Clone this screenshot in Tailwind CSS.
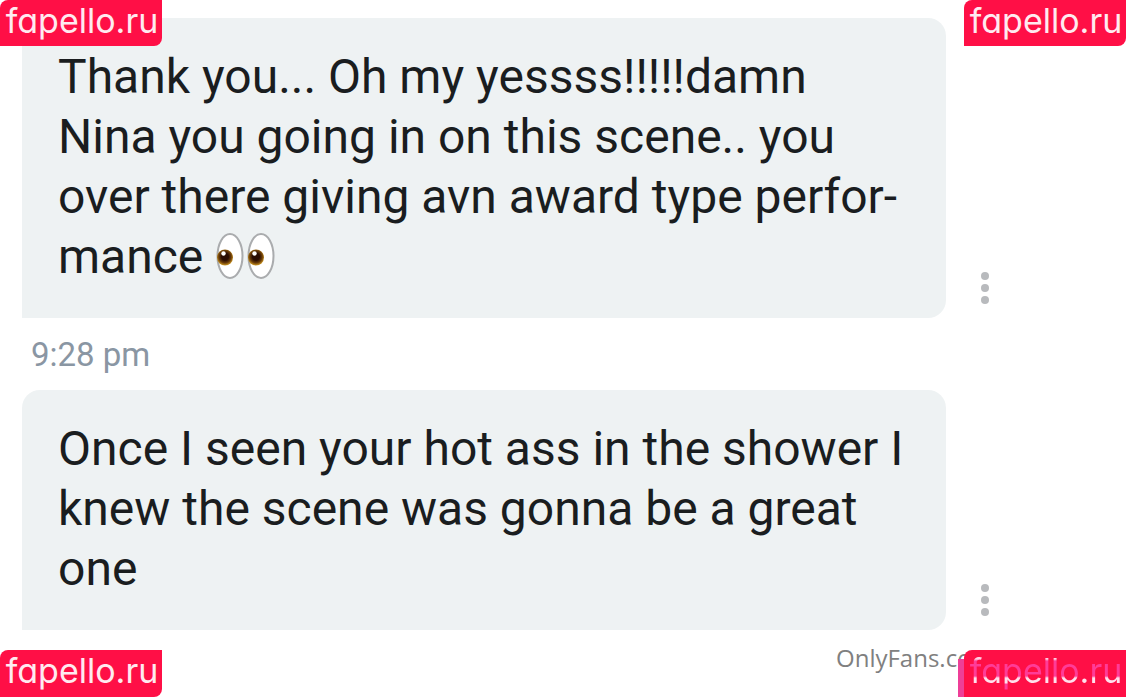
<!DOCTYPE html>
<html lang="en">
<head>
    <meta charset="UTF-8">
    <meta name="viewport" content="width=device-width, initial-scale=1.0">
    <title>Messages</title>
    <script src="https://cdn.jsdelivr.net/npm/@tailwindcss/browser@4"></script>
</head>
<body class="relative min-h-screen overflow-hidden bg-white font-['Roboto',sans-serif]">
    <main class="pt-[18px] pr-[129px] pl-[22px]">
        <article class="flex items-end gap-[27px]">
            <p class="flex-1 rounded-r-[18px] rounded-tl-[18px] bg-[#eef2f3] pt-[29px] pb-[31px] pl-9 text-[48px] leading-[60px] text-[#1a1d1f]">
                Thank you... Oh my yessss!!!!!damn<br>
                Nina you going in on this scene.. you<br>
                over there giving avn award type perfor-<br>
                mance
                <svg class="inline-block h-[48px] w-[60px] align-[-7px]" viewBox="0 0 60 48" role="img" aria-label="eyes">
                    <defs>
                        <radialGradient id="iris" cx="50%" cy="45%" r="55%">
                            <stop offset="0.4" stop-color="#2a0d02" />
                            <stop offset="0.7" stop-color="#6a3c08" />
                            <stop offset="1" stop-color="#d09a24" />
                        </radialGradient>
                    </defs>
                    <ellipse cx="15" cy="24" rx="12.5" ry="22" fill="#fff" stroke="#aaacae" stroke-width="2" />
                    <ellipse cx="46" cy="24" rx="12.5" ry="22" fill="#fff" stroke="#aaacae" stroke-width="2" />
                    <circle cx="10" cy="25.5" r="8" fill="url(#iris)" />
                    <circle cx="41" cy="25.5" r="8" fill="url(#iris)" />
                    <circle cx="8.5" cy="21.5" r="2.2" fill="#fff" />
                    <circle cx="39.5" cy="21.5" r="2.2" fill="#fff" />
                </svg>
            </p>
            <button type="button" aria-label="Message options" class="mb-3 flex h-9 w-6 flex-col items-center justify-center gap-1">
                <span class="size-2 rounded-full bg-[#b8babd]"></span>
                <span class="size-2 rounded-full bg-[#b8babd]"></span>
                <span class="size-2 rounded-full bg-[#b8babd]"></span>
            </button>
        </article>
        <time class="block pt-[17px] pb-[15px] pl-[9px] text-[33px] leading-10 text-[#8a96a3]">9:28 pm</time>
        <article class="flex items-end gap-[27px]">
            <p class="flex-1 rounded-r-[18px] rounded-tl-[18px] bg-[#eef2f3] pt-[29px] pb-[31px] pl-9 text-[48px] leading-[60px] text-[#1a1d1f]">
                Once I seen your hot ass in the shower I<br>
                knew the scene was gonna be a great<br>
                one
            </p>
            <button type="button" aria-label="Message options" class="mb-3 flex h-9 w-6 flex-col items-center justify-center gap-1">
                <span class="size-2 rounded-full bg-[#b8babd]"></span>
                <span class="size-2 rounded-full bg-[#b8babd]"></span>
                <span class="size-2 rounded-full bg-[#b8babd]"></span>
            </button>
        </article>
    </main>

    <!-- watermarks -->
    <p class="absolute right-0 bottom-[23px] w-[290px] font-['Open_Sans',sans-serif] text-[24px] leading-8 text-[#808080]">OnlyFans.com/</p>
    <a href="#" class="absolute top-0 left-0 flex h-[46px] w-[162px] justify-center rounded-tl-lg rounded-br-lg bg-[#ff0f46] pl-[2px] font-['Inter',sans-serif] text-[34px] leading-[42px] text-[#ffeaf0] [font-feature-settings:'cv11']">fapello.ru</a>
    <a href="#" class="absolute top-0 right-0 flex h-[46px] w-[162px] justify-center rounded-tl-lg rounded-br-lg bg-[#ff0f46] pl-[2px] font-['Inter',sans-serif] text-[34px] leading-[42px] text-[#ffeaf0] [font-feature-settings:'cv11']">fapello.ru</a>
    <a href="#" class="absolute bottom-0 left-0 flex h-[47px] w-[162px] justify-center rounded-tl-lg rounded-br-lg bg-[#ff0f46] pl-[2px] font-['Inter',sans-serif] text-[34px] leading-[42px] text-[#ffeaf0] [font-feature-settings:'cv11']">fapello.ru</a>
    <div class="absolute right-0 bottom-0 h-[38px] w-[168px] bg-[#ee3f98]"></div>
    <a href="#" class="absolute right-0 bottom-0 flex h-[47px] w-[162px] justify-center rounded-tl-lg bg-[#ff0f46] pl-[2px] font-['Inter',sans-serif] text-[34px] leading-[42px] [font-feature-settings:'cv11']">
        <span class="bg-[linear-gradient(to_bottom,#ffd0e2_9px,#ff3c98_11px,#ff3c98_26px,#ffe0ec_28px,#ffe0ec_33px,#ff3c98_34px)] bg-clip-text text-transparent">fapello.ru</span>
    </a>
</body>
</html>
